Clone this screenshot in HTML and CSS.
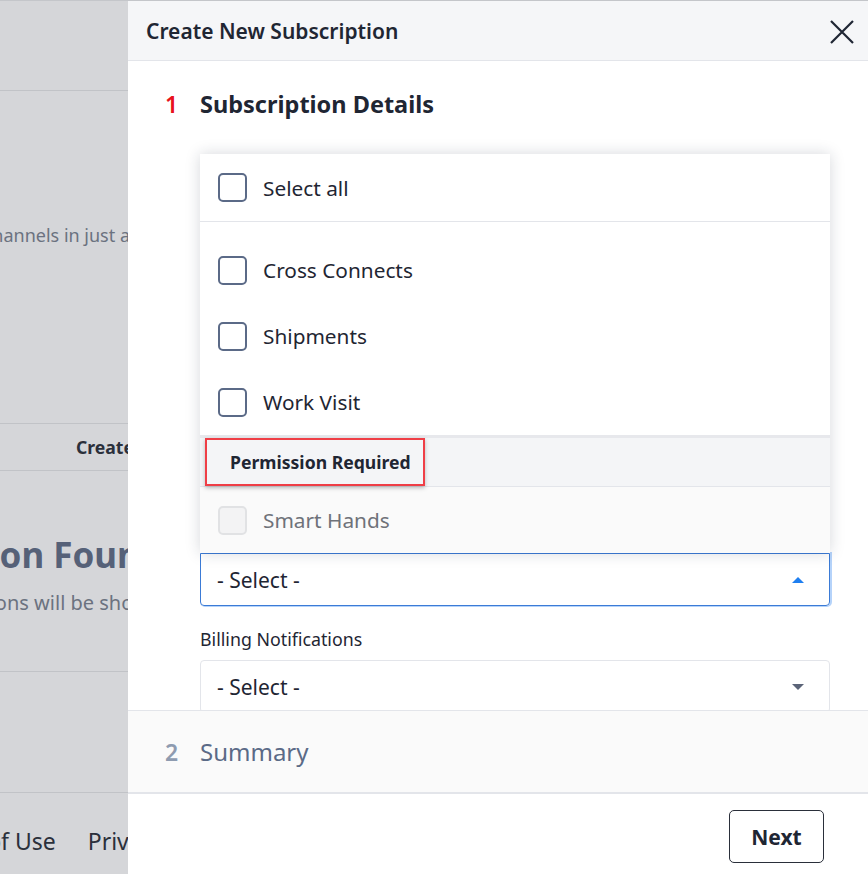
FILE: index.html
```html
<!DOCTYPE html>
<html lang="en">
<head>
<meta charset="utf-8">
<title>Create New Subscription</title>
<link rel="stylesheet" href="styles.css">
</head>
<body>
<div class="page">
  <div class="bg">
    <div class="bg-top"></div>
    <div class="bg-intro"><span class="bg-muted">Subscribe to notification channels in just a</span></div>
    <div class="bg-band"><span class="bg-bold">Create</span></div>
    <div class="bg-empty">
      <div class="bg-heading"><span>No Subscription Found</span></div>
      <div class="bg-sub"><span>Your subscriptions will be shown</span></div>
    </div>
    <div class="bg-gap"></div>
    <div class="bg-footer"><span>Terms of Use</span><span>Privacy</span></div>
  </div>

  <aside class="panel">
    <header class="panel-head">
      <h1 class="panel-title">Create New Subscription</h1>
      <svg class="close" viewBox="0 0 24 24" width="24" height="24"><path d="M1 1 L23 23 M23 1 L1 23" stroke="#1f2633" stroke-width="2.2" fill="none"/></svg>
    </header>

    <div class="panel-body">
      <div class="step-head">
        <span class="step-num active">1</span>
        <h2 class="step-title">Subscription Details</h2>
      </div>

      <div class="form">
        <div class="field-label hidden-label">Operational Notifications</div>
        <div class="select-wrap">
          <div class="menu">
            <div class="menu-all">
              <label class="opt"><span class="box"></span><span>Select all</span></label>
            </div>
            <div class="menu-list">
              <label class="opt"><span class="box"></span><span>Cross Connects</span></label>
              <label class="opt"><span class="box"></span><span>Shipments</span></label>
              <label class="opt"><span class="box"></span><span>Work Visit</span></label>
            </div>
            <div class="group-head"><span class="group-label">Permission Required</span></div>
            <div class="group-list">
              <label class="opt disabled"><span class="box"></span><span>Smart Hands</span></label>
            </div>
          </div>
          <div class="select focused">
            <span>- Select -</span>
            <span class="caret up"></span>
          </div>
        </div>

        <div class="field-label">Billing Notifications</div>
        <div class="select">
          <span>- Select -</span>
          <span class="caret down"></span>
        </div>
      </div>
    </div>

    <div class="step-collapsed">
      <span class="step-num">2</span>
      <span class="step-title muted">Summary</span>
    </div>

    <footer class="panel-foot">
      <button class="btn-next">Next</button>
    </footer>
  </aside>
</div>
</body>
</html>
```

FILE: styles.css
```css
* { box-sizing: border-box; }
html, body { margin: 0; padding: 0; }
body {
  font-family: "Noto Sans", "Open Sans", sans-serif;
  color: #1f2633;
  background: #d5d6d9;
  width: 868px;
  height: 874px;
  overflow: hidden;
}
.page {
  position: relative;
  width: 868px;
  height: 874px;
  border-top: 1px solid #c4c6ca;
}

/* background page (dimmed) */
.bg {
  width: 200px;
  height: 873px;
  display: flex;
  flex-direction: column;
}
.bg > div { display: flex; overflow: hidden; white-space: nowrap; }
.bg-top { height: 90px; border-bottom: 1px solid #c1c3c7; }
.bg-intro {
  height: 333px;
  justify-content: flex-end;
  align-items: flex-start;
  padding-top: 132px;
  padding-right: 70px;
  border-bottom: 1px solid #c1c3c7;
}
.bg-muted { font-size: 18px; color: #6b7280; }
.bg-band {
  height: 47px;
  justify-content: flex-end;
  align-items: center;
  border-bottom: 1px solid #c1c3c7;
  padding-right: 66px;
}
.bg-bold { font-size: 17.6px; font-weight: 700; color: #2b303b; }
.bg-empty {
  height: 201px;
  flex-direction: column;
  border-bottom: 1px solid #c1c3c7;
}
.bg-heading { display: flex; justify-content: flex-end; padding-top: 60px; padding-right: 38px; }
.bg-heading span { font-size: 35px; font-weight: 700; color: #566178; }
.bg-sub { display: flex; justify-content: flex-end; padding-top: 11px; padding-right: 39px; }
.bg-sub span { font-size: 20px; color: #6b7280; }
.bg-gap { height: 121px; border-bottom: 1px solid #c1c3c7; }
.bg-footer {
  flex: 1;
  align-items: center;
  gap: 32px;
  padding-top: 14px;
  font-size: 23px;
  color: #2b303b;
}
.bg-footer span:first-child { margin-left: -85px; }

/* drawer panel */
.panel {
  position: absolute;
  top: 0;
  left: 128px;
  right: 0;
  bottom: 0;
  background: #fff;
  display: flex;
  flex-direction: column;
}
.panel-head {
  height: 60px;
  flex: none;
  background: #f5f6f8;
  border-bottom: 1px solid #e3e5ea;
  display: flex;
  align-items: center;
  justify-content: space-between;
  padding: 0 14px 0 18px;
}
.panel-title {
  margin: 0;
  font-size: 21px;
  font-weight: 600;
  color: #1f2633;
}
.close { display: block; margin-top: 2px; }

.panel-body {
  flex: 1;
  overflow: hidden;
  padding: 25px 38px 0 37px;
}
.step-head {
  display: flex;
  align-items: center;
  height: 36px;
}
.step-num {
  width: 35px;
  font-size: 23px;
  font-weight: 600;
  color: #8e9bb0;
}
.step-num.active { color: #e8121c; }
.step-title {
  margin: 0;
  font-size: 23.5px;
  font-weight: 700;
  color: #1f2633;
}
.step-title.muted { font-size: 24px; font-weight: 400; color: #5b6a87; }

.form { padding: 0 0 0 35px; margin-top: 399px; }
.field-label {
  font-size: 17.8px;
  color: #1f2633;
  height: 22px;
  line-height: 22px;
  margin-bottom: 10px;
}
.hidden-label { visibility: hidden; }

.select-wrap { position: relative; margin-bottom: 22px; }
.select {
  height: 53px;
  border: 1px solid #e3e5ea;
  border-radius: 4px;
  display: flex;
  align-items: center;
  justify-content: space-between;
  padding: 0 25px 0 16px;
  font-size: 21px;
  color: #1f2633;
}
.select.focused {
  border-color: #3b7bd6;
  border-radius: 0 0 4px 4px;
  box-shadow: 1px 0 0 1px rgba(120, 175, 245, 0.55);
}
.caret {
  width: 0;
  height: 0;
  border-left: 6px solid transparent;
  border-right: 6px solid transparent;
}
.caret.up { border-bottom: 6px solid #1f7ff0; }
.caret.down { border-top: 6px solid #5b6478; }

/* dropdown menu */
.menu {
  position: absolute;
  left: 0;
  right: 0;
  bottom: 100%;
  background: #fff;
  box-shadow: 0 0 14px rgba(30, 40, 60, 0.18);
  z-index: 2;
}
.menu-all { border-bottom: 1px solid #e3e5ea; }
.menu-all .opt { height: 67px; }
.menu-list { padding-top: 15px; }
.opt {
  height: 66px;
  display: flex;
  align-items: center;
  gap: 16px;
  padding-left: 18px;
  font-size: 20.8px;
  color: #1f2633;
}
.box {
  width: 29px;
  height: 29px;
  border: 2.5px solid #5b6a87;
  border-radius: 5px;
  background: #fff;
}
.group-head {
  height: 52px;
  border-top: 3px solid #e7e8ec;
  border-bottom: 1px solid #e3e5ea;
  background: #f4f5f7;
  display: flex;
  align-items: center;
  padding-left: 5px;
}
.group-label {
  height: 48px;
  display: flex;
  align-items: center;
  padding: 0 12px 0 23px;
  border: 2px solid #ef3e46;
  box-shadow: 0 2px 4px rgba(0, 0, 0, 0.25);
  font-size: 17.6px;
  font-weight: 700;
  color: #1f2633;
  margin-top: -1px;
}
.group-list { background: #fafafa; }
.opt.disabled { color: #6f7279; }
.opt.disabled .box { border-color: #e1e2e4; background: #f3f3f4; }

/* collapsed step 2 */
.step-collapsed {
  flex: none;
  height: 84px;
  background: #fafafa;
  border-top: 1px solid #e3e5ea;
  border-bottom: 2px solid #e3e5ea;
  display: flex;
  align-items: center;
  padding-left: 37px;
}

.panel-foot {
  flex: none;
  height: 80px;
  display: flex;
  align-items: center;
  justify-content: flex-end;
  padding-right: 44px;
}
.btn-next {
  width: 95px;
  height: 53px;
  border: 1px solid #2a2f3a;
  border-radius: 5px;
  background: #fff;
  font-family: "Noto Sans", "Open Sans", sans-serif;
  font-size: 21px;
  font-weight: 700;
  color: #1f2633;
  margin-top: 5px;
}
```
